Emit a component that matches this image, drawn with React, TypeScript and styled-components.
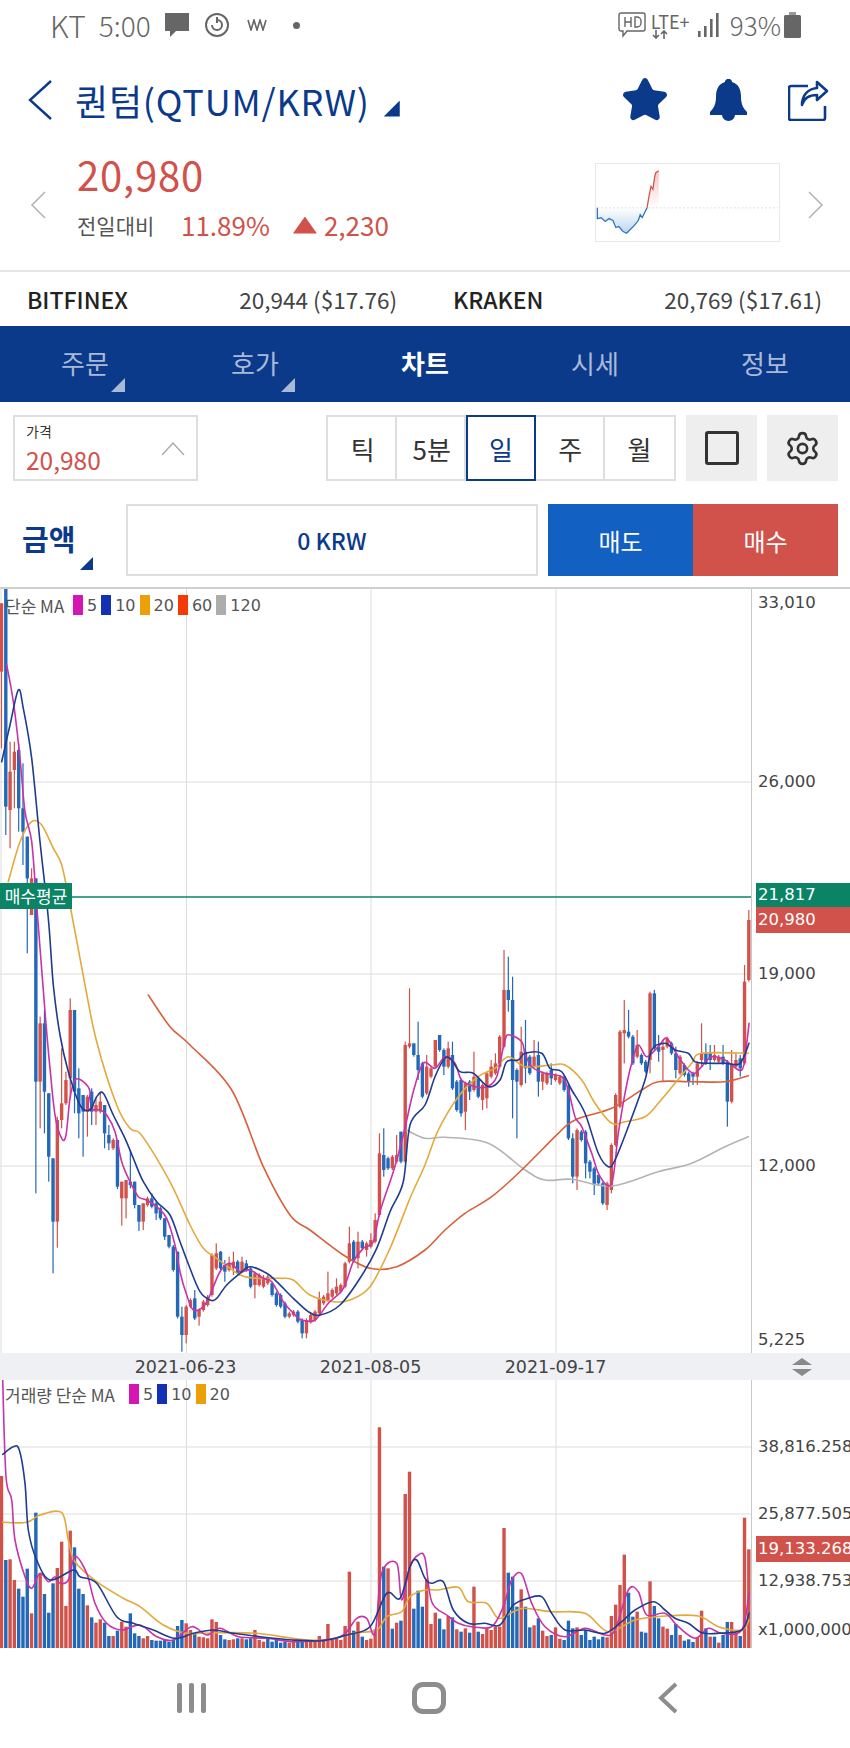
import { Settings, Star } from 'lucide-react'
import styled, { createGlobalStyle } from 'styled-components'

const NAVY = '#0b3a8b'
const RED = '#d0524a'
const BLUE = '#2468b8'
const GRID = '#dcdcdc'
const KR = `"Noto Sans CJK KR", "Noto Sans", sans-serif`
const AXIS = `"DejaVu Sans", "Noto Sans CJK KR", sans-serif`

type Pt = [number, number]
type Candle = [string, number, number, number?, number?]

const R = RED
const B = BLUE

// all coordinates below were read off the reference at 3x, hence the offsets
const conv = (pts: Pt[], ox: number, oy: number): Pt[] => pts.map(([x, y]) => [ox + x / 3, oy + y / 3])

// catmull-rom through the read-off points so the averages don't look kinked
const toPath = (pts: Pt[]) => {
    let d = `M${pts[0][0].toFixed(1)} ${pts[0][1].toFixed(1)}`
    for (let i = 0; i < pts.length - 1; i++) {
        const p0 = pts[Math.max(i - 1, 0)]
        const p1 = pts[i]
        const p2 = pts[i + 1]
        const p3 = pts[Math.min(i + 2, pts.length - 1)]
        const c1x = p1[0] + (p2[0] - p0[0]) / 6
        const c1y = p1[1] + (p2[1] - p0[1]) / 6
        const c2x = p2[0] - (p3[0] - p1[0]) / 6
        const c2y = p2[1] - (p3[1] - p1[1]) / 6
        d += `C${c1x.toFixed(1)} ${c1y.toFixed(1)} ${c2x.toFixed(1)} ${c2y.toFixed(1)} ${p2[0].toFixed(1)} ${p2[1].toFixed(1)}`
    }
    return d
}

const candlesA: Candle[] = [
    [R, 55, 260, 55, 490], [B, 0, 665, 0, 750], [R, 560, 675, 470, 790], [R, 500, 555, 470, 670],
    [B, 495, 670, 475, 740], [B, 670, 740, 535, 840], [B, 755, 880, 755, 1105], [R, 880, 990, 850, 990],
]
const candlesB: Candle[] = [
    [B, -320, 290, -320, 625], [R, 115, 290, 95, 430], [B, 115, 320, 75, 445], [B, 325, 515, 325, 590],
    [B, 520, 710, 520, 865], [R, 405, 710, 395, 788], [R, 355, 405, 190, 430], [R, 285, 355, 260, 360],
    [R, 75, 280, 40, 340], [B, 75, 320, 75, 385], [B, 310, 385, 250, 460], [B, 330, 380, 330, 515],
    [R, 335, 380, 330, 455], [B, 320, 380, 310, 420], [R, 360, 380, 340, 420], [R, 350, 380, 320, 385],
    [B, 360, 445, 360, 490], [B, 450, 475, 420, 495], [R, 465, 490, 460, 495], [B, 465, 605, 465, 612],
    [R, 590, 640, 590, 722], [R, 585, 640, 585, 700], [B, 590, 600, 495, 610], [B, 590, 660, 590, 670],
    [B, 660, 710, 660, 738], [R, 655, 710, 655, 735], [R, 640, 660, 635, 665], [B, 640, 665, 625, 670],
    [B, 655, 685, 650, 705], [B, 670, 700, 665, 705], [B, 700, 755, 700, 765], [B, 750, 785, 750, 790],
    [B, 785, 855, 780, 860], [B, 800, 995, 800, 1000], [B, 995, 1050, 965, 1100], [R, 965, 1050, 960, 1075],
    [R, 945, 965, 940, 970], [B, 940, 1000, 915, 1005], [R, 975, 995, 970, 1022], [R, 950, 975, 945, 980],
    [R, 935, 960, 930, 965], [R, 810, 930, 805, 935], [R, 805, 850, 775, 855], [B, 800, 850, 798, 855],
    [B, 840, 860, 825, 890], [R, 835, 855, 815, 860], [R, 830, 850, 800, 870], [B, 830, 865, 825, 870],
    [R, 830, 860, 815, 865], [B, 835, 855, 825, 860], [B, 850, 905, 845, 910], [R, 865, 900, 860, 940],
    [R, 870, 900, 865, 905], [R, 880, 905, 870, 910], [R, 875, 895, 870, 900], [B, 895, 930, 890, 935],
    [B, 925, 960, 920, 965], [B, 930, 965, 925, 970], [B, 955, 995, 950, 1000], [R, 985, 995, 980, 1000],
    [R, 980, 990, 975, 995], [B, 980, 1010, 975, 1015], [B, 1005, 1045, 1000, 1060], [R, 1005, 1045, 1000, 1060],
    [R, 990, 1012, 985, 1016], [R, 980, 1005, 975, 1010], [R, 940, 985, 920, 990], [R, 935, 955, 930, 960],
    [R, 925, 945, 860, 950], [R, 915, 935, 910, 940], [R, 905, 925, 880, 930], [R, 900, 920, 895, 925],
    [R, 835, 905, 830, 910], [R, 775, 830, 725, 835], [B, 770, 825, 765, 830], [R, 770, 820, 740, 850],
    [B, 770, 790, 765, 795], [R, 775, 795, 770, 815], [R, 765, 785, 745, 790], [R, 705, 770, 685, 775],
    [R, 505, 690, 445, 695], [B, 510, 555, 430, 575], [B, 520, 550, 515, 555], [R, 515, 550, 510, 555],
    [R, 510, 530, 450, 535], [B, 440, 530, 440, 535], [R, 180, 530, 170, 535], [R, 175, 185, 10, 190],
    [B, 175, 210, 175, 215], [B, 210, 255, 110, 285], [B, 235, 335, 230, 340],
]
const candlesC: Candle[] = [
    [R, 500, 580, 465, 585], [R, 505, 530, 500, 535], [R, 420, 500, 420, 505], [B, 405, 450, 405, 455],
    [B, 450, 500, 445, 525], [R, 445, 500, 425, 505], [B, 465, 565, 425, 570], [B, 545, 630, 540, 635],
    [B, 540, 640, 535, 650], [R, 550, 635, 545, 690], [B, 545, 575, 540, 600], [R, 530, 570, 455, 575],
    [B, 535, 590, 530, 595], [R, 555, 600, 550, 630], [R, 520, 595, 515, 625], [R, 500, 530, 480, 535],
    [R, 490, 520, 460, 525], [R, 410, 500, 405, 505], [R, 270, 440, 150, 445], [B, 270, 300, 170, 335],
    [B, 300, 540, 230, 655], [B, 510, 545, 505, 715], [R, 455, 555, 380, 560], [B, 455, 505, 360, 550],
    [B, 470, 520, 465, 525], [R, 470, 500, 420, 505], [B, 465, 545, 425, 590], [R, 520, 545, 515, 570],
    [R, 520, 550, 515, 555], [B, 510, 535, 490, 555], [R, 525, 540, 520, 545], [R, 530, 550, 525, 555],
    [B, 530, 570, 525, 575], [B, 560, 715, 555, 720], [B, 715, 830, 700, 850], [R, 690, 830, 685, 870],
    [B, 695, 720, 690, 725], [B, 695, 790, 690, 835], [B, 785, 815, 780, 835], [B, 805, 855, 800, 885],
    [B, 825, 850, 820, 855], [B, 850, 910, 845, 915], [R, 850, 915, 845, 930], [R, 735, 870, 730, 880],
    [R, 585, 735, 580, 740], [R, 395, 620, 390, 625], [R, 390, 400, 300, 490], [B, 395, 410, 330, 415],
    [B, 410, 490, 405, 495], [R, 435, 470, 390, 475], [B, 465, 490, 460, 495], [B, 485, 515, 480, 520],
    [R, 280, 480, 275, 520], [B, 280, 445, 270, 450], [B, 440, 455, 405, 485], [R, 440, 450, 420, 545],
    [R, 415, 440, 410, 445], [B, 430, 460, 425, 465], [B, 460, 510, 440, 535], [R, 470, 520, 465, 525],
    [B, 495, 525, 490, 530], [B, 520, 545, 515, 560], [B, 520, 530, 515, 555], [R, 490, 530, 485, 555],
    [R, 460, 480, 370, 500], [B, 460, 490, 430, 495], [B, 460, 480, 435, 510], [R, 465, 480, 435, 485],
    [R, 470, 485, 465, 490], [B, 470, 490, 435, 495], [B, 485, 605, 480, 680], [R, 490, 605, 450, 610],
    [R, 480, 500, 460, 505], [B, 475, 505, 465, 530], [R, 245, 490, 195, 495], [R, 60, 240, 30, 245],
]

const toScreen = (list: Candle[], oy: number) => list.map(([c, t, b, h, l]) => ({
    color: c,
    top: oy + t / 3,
    bottom: oy + b / 3,
    high: oy + (h ?? t) / 3,
    low: oy + (l ?? b) / 3,
}))
const candles = [...toScreen(candlesA, 585), ...toScreen(candlesB, 985), ...toScreen(candlesC, 900)]

const ma5 = toPath([
    ...conv([[20, 240], [40, 350], [60, 520], [75, 680], [95, 770], [110, 960]], 0, 585),
    ...conv([[135, 80], [150, 250], [165, 390], [185, 460], [198, 450], [210, 340], [225, 285], [250, 290], [270, 320], [265, 370], [300, 375], [320, 390], [345, 440], [365, 530], [390, 590], [415, 635], [440, 645], [470, 665], [500, 700], [525, 780], [540, 860], [560, 930], [580, 975], [610, 965], [630, 930], [660, 860], [690, 835], [720, 860], [750, 855], [790, 880], [815, 890], [850, 950], [880, 985], [905, 1005], [945, 1005], [985, 955], [1030, 910], [1060, 830], [1090, 790], [1120, 770], [1140, 680], [1180, 560], [1210, 450], [1240, 320], [1270, 235]], 0, 985),
    ...conv([[30, 505], [60, 470], [90, 490], [110, 540], [150, 560], [185, 560], [215, 530], [240, 420], [255, 405], [290, 425], [300, 460], [320, 500], [360, 520], [410, 530], [430, 570], [450, 650], [470, 680], [500, 760], [525, 830], [560, 850], [580, 700], [600, 580], [620, 490], [640, 435], [665, 470], [700, 440], [725, 415], [760, 470], [790, 510], [810, 520], [830, 500], [860, 470], [900, 480], [950, 510], [965, 430], [972, 370]], 425, 900),
])
const ma10 = toPath([
    ...conv([[5, 530], [30, 420], [55, 315], [70, 370], [95, 520], [120, 770], [145, 1000]], 0, 585),
    ...conv([[160, 0], [180, 150], [205, 260], [240, 360], [270, 375], [290, 335], [310, 325], [340, 390], [375, 460], [400, 520], [430, 590], [470, 650], [510, 690], [540, 770], [570, 850], [600, 920], [630, 945], [650, 940], [680, 900], [720, 865], [750, 845], [800, 865], [830, 890], [880, 940], [925, 980], [960, 990], [1020, 960], [1080, 880], [1130, 790], [1170, 680], [1210, 590], [1230, 420], [1275, 360]], 0, 985),
    ...conv([[30, 530], [60, 475], [80, 480], [105, 515], [145, 520], [190, 560], [225, 540], [245, 485], [280, 480], [300, 460], [350, 460], [375, 505], [410, 515], [440, 570], [480, 640], [520, 760], [550, 800], [570, 780], [610, 680], [660, 540], [680, 450], [720, 430], [750, 450], [790, 460], [810, 485], [850, 490], [900, 490], [945, 490], [972, 430]], 425, 900),
])
const ma20 = toPath([
    ...conv([[25, 890], [60, 770], [95, 710], [125, 720], [160, 790], [185, 840], [210, 960]], 0, 585),
    ...conv([[255, 0], [290, 170], [350, 360], [390, 430], [420, 445], [470, 520], [520, 610], [570, 720], [610, 790], [650, 820], [720, 870], [770, 880], [840, 880], [880, 885], [930, 930], [1000, 950], [1050, 945], [1110, 905], [1170, 790], [1230, 640], [1275, 540]], 0, 985),
    ...conv([[40, 690], [100, 590], [160, 530], [210, 505], [250, 470], [300, 500], [380, 495], [420, 495], [470, 540], [510, 610], [560, 670], [600, 665], [660, 650], [700, 610], [750, 550], [800, 490], [830, 460], [970, 460]], 425, 900),
])
const ma60 = toPath([
    ...conv([[445, 30], [510, 125], [570, 180], [695, 315], [790, 545], [870, 690], [930, 735], [1030, 810], [1110, 850], [1190, 845], [1275, 795]], 0, 985),
    ...conv([[60, 990], [120, 940], [200, 890], [290, 810], [400, 700], [450, 660], [560, 625], [650, 570], [700, 545], [800, 545], [900, 545], [970, 527]], 425, 900),
])
const ma120 = toPath([
    ...conv([[1220, 435], [1275, 460]], 0, 985),
    ...conv([[60, 712], [190, 730], [300, 810], [360, 840], [440, 838], [560, 858], [700, 815], [800, 790], [900, 740], [970, 710]], 425, 900),
])

const volumes: [string, number][] = ([
    'r378', 'b630', 'r628', 'r690', 'b716', 'b740', 'b656', 'r790', 'b488', 'r670', 'b732', 'b788', 'b700', 'r654', 'r575', 'r768', 'r542', 'b592', 'b716', 'b732',
    'r766', 'b802', 'r818', 'r808', 'b818', 'b858', 'r858', 'b842', 'r815', 'r830', 'b790', 'b850', 'b858', 'r865', 'r858', 'b870', 'b872', 'b872', 'b870', 'b875',
    'b870', 'b828', 'b810', 'r820', 'r840', 'b850', 'r860', 'r862', 'r865', 'r808', 'r816', 'b855', 'b868', 'r870', 'r868', 'b865', 'r865', 'b868', 'b865', 'r840',
    'r870', 'r875', 'b865', 'b875', 'b868', 'b878', 'b875', 'r878', 'r870', 'b875', 'b872', 'r872', 'r872', 'r870', 'r858', 'r872', 'r822', 'r865', 'r865', 'r870',
    'r828', 'r665', 'b842', 'r815', 'b860', 'r870', 'r866', 'r838', 'r232', 'b650', 'r655', 'b836', 'r818', 'b812', 'r432', 'r365', 'b776', 'b722', 'b770',
    'r690', 'r822', 'r788', 'b806', 'b838', 'r798', 'b802', 'r838', 'b845', 'r835', 'b848', 'r710', 'b845', 'r852', 'r835', 'r840', 'r830', 'r830', 'r534', 'b668',
    'b680', 'b770', 'r718', 'b770', 'b832', 'r826', 'b805', 'r842', 'r858', 'b855', 'r832', 'r866', 'b870', 'b812', 'b835', 'r832', 'b855', 'b840', 'b870', 'b860',
    'b868', 'b860', 'r862', 'r798', 'r764', 'r705', 'r614', 'b728', 'b800', 'r785', 'b845', 'b848', 'r694', 'b768', 'b805', 'r830', 'r836', 'b855', 'b822', 'r855',
    'b872', 'b868', 'b876', 'r862', 'r782', 'b835', 'r860', 'b860', 'r878', 'b855', 'b816', 'r816', 'r850', 'b858', 'r503', 'r598',
]).map(v => [v[0] === 'r' ? R : B, 1350 + Number(v.slice(1)) / 3])

const vol5 = toPath([
    ...conv([[8, 90], [18, 380], [35, 450], [45, 570], [75, 680], [95, 715], [120, 670], [145, 695], [165, 680], [180, 700], [205, 690], [225, 620], [260, 670], [285, 760], [320, 820], [365, 840], [420, 825], [470, 860], [520, 870], [575, 830], [620, 855], [660, 835], [715, 860], [800, 865], [880, 875], [970, 870], [1030, 855], [1070, 805], [1100, 805], [1125, 850], [1145, 670], [1190, 640], [1205, 750], [1230, 650], [1255, 615], [1275, 625]], 0, 1350),
    ...conv([[20, 755], [65, 795], [100, 820], [140, 830], [200, 830], [235, 770], [260, 690], [290, 672], [320, 760], [360, 830], [420, 860], [480, 835], [540, 855], [570, 840], [610, 720], [640, 725], [665, 795], [720, 790], [760, 830], [810, 865], [850, 835], [890, 850], [950, 840], [972, 730]], 425, 1350),
])
const vol10 = toPath([
    ...conv([[8, 313], [40, 290], [58, 300], [75, 400], [85, 540], [110, 630], [150, 690], [220, 660], [240, 680], [290, 700], [350, 800], [400, 820], [460, 840], [525, 865], [580, 850], [640, 840], [700, 850], [780, 860], [880, 870], [970, 872], [1040, 855], [1110, 830], [1160, 730], [1200, 745], [1230, 650], [1250, 630], [1275, 685]], 0, 1350),
    ...conv([[20, 700], [55, 695], [85, 780], [130, 820], [180, 820], [225, 825], [265, 765], [310, 745], [350, 740], [380, 790], [420, 840], [480, 840], [540, 850], [590, 815], [630, 780], [685, 755], [720, 780], [750, 805], [790, 820], [830, 848], [880, 850], [950, 840], [972, 790]], 425, 1350),
])
const vol20 = toPath([
    ...conv([[8, 517], [80, 517], [120, 495], [185, 488], [205, 570], [225, 635], [290, 695], [370, 745], [420, 770], [490, 825], [560, 850], [650, 848], [770, 850], [900, 868], [980, 870], [1060, 850], [1130, 840], [1160, 800], [1205, 785], [1230, 740], [1275, 720]], 0, 1350),
    ...conv([[40, 720], [100, 712], [130, 755], [185, 760], [220, 805], [265, 785], [300, 775], [380, 785], [480, 790], [550, 845], [630, 810], [720, 798], [820, 798], [880, 830], [950, 840], [972, 810]], 425, 1350),
])

const GlobalStyle = createGlobalStyle`
    html, body {
        margin: 0;
        padding: 0;
        background: #fff;
    }
    body {
        font-family: ${KR};
    }
`

const Page = styled.div`
    width: 850px;
    height: 1748px;
    overflow: hidden;
    background: #fff;
`

const StatusBar = styled.div`
    height: 56px;
    display: flex;
    align-items: center;
    padding: 0 49px 6px 50px;
    box-sizing: border-box;
    color: #666;
`

const StatusText = styled.span<{ $size: number; $gap?: number }>`
    font-size: ${p => p.$size}px;
    font-weight: 300;
    margin-right: ${p => p.$gap ?? 0}px;
    line-height: 1;
`

const StatusIcon = styled.svg<{ $gap?: number }>`
    flex: none;
    margin-right: ${p => p.$gap ?? 0}px;
`

const StatusRight = styled.div`
    margin-left: auto;
    display: flex;
    align-items: center;
`

const LteBlock = styled.div`
    width: 42px;
    margin-right: 5px;
    display: flex;
    flex-direction: column;
    font-size: 18px;
    line-height: 18px;
    font-weight: 400;
`

const Header = styled.div`
    height: 88px;
    display: flex;
    align-items: center;
    padding: 0 21px 0 28px;
    color: ${NAVY};
`

const Title = styled.span`
    margin-left: 23px;
    font-size: 36px;
    font-weight: 400;
    letter-spacing: 0.8px;
    white-space: nowrap;
`

const Corner = styled.span<{ $size: number; $color: string }>`
    display: inline-block;
    width: ${p => p.$size}px;
    height: ${p => p.$size}px;
    background: ${p => p.$color};
    clip-path: polygon(100% 0, 100% 100%, 0 100%);
`

const TitleCorner = styled(Corner)`
    margin: 17px 0 0 14px;
`

const HeaderIcons = styled.div`
    margin-left: auto;
    display: flex;
    align-items: center;
    gap: 40px;
`

const Quote = styled.div`
    height: 128px;
    display: flex;
    align-items: flex-start;
    padding: 0 26px 0 30px;
    border-bottom: 2px solid #e6e6e6;
    box-sizing: border-box;
`

const QuoteChevron = styled.svg`
    margin-top: 47px;
    flex: none;
`

const QuoteInfo = styled.div`
    margin-left: 31px;
    display: flex;
    flex-direction: column;
`

const QuotePrice = styled.div`
    margin-top: 4px;
    color: ${RED};
    font-size: 40px;
    line-height: 52px;
    letter-spacing: 0.8px;
`

const QuoteSub = styled.div`
    margin-top: 10px;
    display: flex;
    align-items: center;
    color: ${RED};
    font-size: 26px;
    line-height: 30px;
`

const QuoteLabel = styled.span`
    width: 104px;
    color: #555;
    font-size: 21px;
`

const UpTriangle = styled.span`
    width: 24px;
    height: 17px;
    margin: 0 7px 0 23px;
    background: ${RED};
    clip-path: polygon(50% 0, 100% 100%, 0 100%);
`

const Spark = styled.svg`
    margin: 19px 28px 0 auto;
    flex: none;
    border: 1px solid #e8e8e8;
    box-sizing: border-box;
`

const Exchanges = styled.div`
    height: 54px;
    display: grid;
    grid-template-columns: 370px 369px;
    column-gap: 56px;
    align-items: center;
    padding-left: 27px;
`

const ExchangePair = styled.div`
    display: flex;
    justify-content: space-between;
    align-items: center;
`

const ExchangeName = styled.span`
    font-size: 23px;
    font-weight: 500;
    color: #222;
`

const ExchangeValue = styled.span`
    color: #444;
    font-size: 22.5px;
    white-space: nowrap;
`

const TabBar = styled.div`
    height: 76px;
    display: grid;
    grid-template-columns: repeat(5, 170px);
    background: ${NAVY};
`

const Tab = styled.div<{ $active?: boolean }>`
    position: relative;
    display: flex;
    align-items: center;
    justify-content: center;
    padding-bottom: 4px;
    font-size: 26px;
    font-weight: ${p => (p.$active ? 700 : 400)};
    color: ${p => (p.$active ? '#fff' : '#a9b9d8')};
`

const TabCorner = styled(Corner)`
    position: absolute;
    left: 111px;
    top: 52px;
`

const Controls = styled.div`
    margin-top: 13px;
    height: 66px;
    display: flex;
    padding: 0 12px 0 13px;
`

const PriceBox = styled.div`
    position: relative;
    width: 185px;
    border: 2px solid #dedede;
    box-sizing: border-box;
    padding: 4px 0 0 11px;
`

const PriceBoxLabel = styled.div`
    font-size: 14px;
    line-height: 21px;
    color: #333;
`

const PriceBoxValue = styled.div`
    font-size: 24.5px;
    line-height: 36px;
    color: ${RED};
`

const PriceBoxCaret = styled.svg`
    position: absolute;
    right: 11px;
    top: 25px;
`

const Segments = styled.div`
    width: 350px;
    margin-left: auto;
    display: grid;
    grid-template-columns: repeat(5, 1fr);
    border: 2px solid #dedede;
    box-sizing: border-box;
`

const Segment = styled.div<{ $active?: boolean }>`
    display: flex;
    align-items: center;
    justify-content: center;
    margin: -2px 0;
    font-size: 26px;
    color: ${p => (p.$active ? NAVY : '#333')};
    border: 2px solid ${p => (p.$active ? NAVY : 'transparent')};
    border-right-color: ${p => (p.$active ? NAVY : '#dedede')};
    box-sizing: border-box;
    &:last-child {
        border-right-color: transparent;
    }
`

const SquareButton = styled.div`
    width: 71px;
    margin-left: 10px;
    display: flex;
    align-items: center;
    justify-content: center;
    background: #eeeeee;
    color: #333;
`

const WindowGlyph = styled.div`
    width: 34px;
    height: 34px;
    border: 3px solid #333;
    border-radius: 3px;
    box-sizing: border-box;
`

const AmountRow = styled.div`
    margin-top: 23px;
    height: 72px;
    display: flex;
    padding-right: 12px;
`

const AmountLabel = styled.div`
    position: relative;
    width: 126px;
    padding: 12px 0 0 22px;
    box-sizing: border-box;
    color: ${NAVY};
    font-size: 29px;
    line-height: 44px;
    font-weight: 700;
`

const AmountCorner = styled(Corner)`
    position: absolute;
    left: 80px;
    top: 53px;
`

const AmountInput = styled.div`
    width: 412px;
    display: flex;
    align-items: center;
    justify-content: center;
    border: 2px solid #dedede;
    box-sizing: border-box;
    color: ${NAVY};
    font-size: 23px;
    font-weight: 500;
`

const TradeButton = styled.div<{ $color: string; $gap?: number }>`
    width: 145px;
    margin-left: ${p => p.$gap ?? 0}px;
    display: flex;
    align-items: center;
    justify-content: center;
    background: ${p => p.$color};
    color: #fff;
    font-size: 24px;
`

const Chart = styled.div`
    margin-top: 11px;
    border-top: 2px solid #cfcfcf;
`

const Pane = styled.div<{ $height: number }>`
    height: ${p => p.$height}px;
    display: flex;
`

const Plot = styled.div`
    position: relative;
    width: 751px;
    flex: none;
    border-right: 1px solid #c8c8c8;
    box-sizing: content-box;
`

const PlotSvg = styled.svg`
    display: block;
`

const Legend = styled.div<{ $top: number }>`
    position: absolute;
    left: 5px;
    top: ${p => p.$top}px;
    display: flex;
    align-items: center;
    height: 22px;
    font-family: ${AXIS};
    font-size: 16px;
    color: #555;
    white-space: nowrap;
`

const LegendName = styled.span<{ $width: number }>`
    width: ${p => p.$width}px;
    font-family: ${KR};
    font-size: 17px;
`

const Swatch = styled.span<{ $color: string }>`
    width: 10px;
    height: 20px;
    margin: 0 4px;
    background: ${p => p.$color};
`

const AvgTag = styled.div`
    position: absolute;
    left: 0;
    top: 294px;
    width: 72px;
    height: 26px;
    background: #0a8465;
    color: #fff;
    font-size: 17px;
    line-height: 26px;
    text-align: center;
    white-space: nowrap;
`

const Axis = styled.div`
    position: relative;
    flex: 1;
    overflow: hidden;
    font-family: ${AXIS};
    font-size: 16.5px;
    color: #444;
`

const AxisLabel = styled.span<{ $y: number }>`
    position: absolute;
    left: 6px;
    top: ${p => p.$y - 12}px;
    line-height: 24px;
    white-space: nowrap;
`

const AxisTag = styled.div<{ $y: number; $h: number; $color: string }>`
    position: absolute;
    left: 4px;
    right: 0;
    top: ${p => p.$y}px;
    height: ${p => p.$h}px;
    padding-left: 2px;
    background: ${p => p.$color};
    color: #fff;
    line-height: ${p => p.$h}px;
    white-space: nowrap;
`

const TimeBar = styled.div`
    height: 27px;
    display: flex;
    align-items: center;
    background: #eef0f4;
    padding-left: 93px;
    font-family: ${AXIS};
    font-size: 17.5px;
    color: #444;
`

const TimeLabel = styled.span`
    width: 185px;
    flex: none;
    text-align: center;
`

const SwapHandle = styled.svg`
    margin-left: 144px;
    flex: none;
`

const NavBar = styled.div`
    height: 100px;
    display: grid;
    grid-template-columns: 382px 86px 1fr;
    align-items: center;
`

const NavCell = styled.div<{ $pad: number }>`
    padding-left: ${p => p.$pad}px;
    display: flex;
`

const Recents = styled.div`
    display: flex;
    gap: 7px;
`

const RecentsBar = styled.span`
    width: 5px;
    height: 30px;
    border-radius: 2px;
    background: #8d8d8d;
`

const HomeGlyph = styled.div`
    width: 34px;
    height: 32px;
    border: 5px solid #8d8d8d;
    border-radius: 11px;
    box-sizing: border-box;
`

const Sparkline = () => (
    <Spark width="185" height="79" viewBox="596 164 185 79">
        <defs>
            <linearGradient id="sparkBlue" x1="0" y1="0" x2="0" y2="1">
                <stop offset="0" stopColor="#ffffff" />
                <stop offset="1" stopColor="#bcd6f0" />
            </linearGradient>
            <linearGradient id="sparkRed" x1="0" y1="0" x2="0" y2="1">
                <stop offset="0" stopColor="#f6c4c0" />
                <stop offset="1" stopColor="#ffffff" />
            </linearGradient>
        </defs>
        <polygon points="596,209 596,220 604,223 612,222 618,230 626,235 634,227 642,217 647,209" fill="url(#sparkBlue)" />
        <polygon points="647,209 649,197 653,187 656,173 659,171 659,209" fill="url(#sparkRed)" />
        <line x1="596" y1="209" x2="781" y2="209" stroke="#ddd" strokeWidth="1" strokeDasharray="2 2" />
        <polyline points="596,209 596,220 600,219 604,223 608,220 612,222 615,229 618,228 622,233 626,235 630,231 634,227 638,222 640,216 642,219 647,209" fill="none" stroke="#2f75bd" strokeWidth="1.3" />
        <polyline points="647,209 649,197 651,187 653,190 655,176 656,173 659,171" fill="none" stroke={RED} strokeWidth="1.3" />
    </Spark>
)

const Candles = () => (
    <>
        {candles.map((c, i) => {
            const x = 1.5 + 4.295 * i
            return (
                <g key={i} fill={c.color}>
                    <rect x={x - 0.6} y={c.high} width={1.2} height={c.low - c.high} />
                    <rect x={x - 1.7} y={c.top} width={3.4} height={c.bottom - c.top} />
                </g>
            )
        })}
    </>
)

const MaLine = ({ d, color }: { d: string; color: string }) => (
    <path d={d} fill="none" stroke={color} strokeWidth={1.6} strokeLinejoin="round" strokeLinecap="round" />
)

const VerticalGrid = ({ y1, y2 }: { y1: number; y2: number }) => (
    <>
        {[186.5, 371, 556].map(x => (
            <line key={x} x1={x} x2={x} y1={y1} y2={y2} stroke={GRID} strokeWidth="1" />
        ))}
    </>
)

const HorizontalGrid = ({ ys }: { ys: number[] }) => (
    <>
        {ys.map(y => (
            <line key={y} x1="0" x2="751" y1={y} y2={y} stroke={GRID} strokeWidth="1" />
        ))}
    </>
)

const PricePane = () => (
    <Pane $height={764}>
        <Plot>
            <PlotSvg width="751" height="764" viewBox="0 589 751 764">
                <line x1="1" x2="1" y1="589" y2="1353" stroke={GRID} />
                <VerticalGrid y1={589} y2={1353} />
                <HorizontalGrid ys={[782, 974, 1166]} />
                <line x1="0" x2="751" y1="897" y2="897" stroke="#0a8465" strokeWidth="1.5" />
                <Candles />
                <MaLine d={ma120} color="#b4b4b4" />
                <MaLine d={ma60} color="#d8603c" />
                <MaLine d={ma20} color="#e2aa3c" />
                <MaLine d={ma5} color="#c833aa" />
                <MaLine d={ma10} color="#1f3c8f" />
            </PlotSvg>
            <Legend $top={5}>
                <LegendName $width={64}>단순 MA</LegendName>
                <Swatch $color="#d516b4" />5
                <Swatch $color="#1231b4" />10
                <Swatch $color="#eba007" />20
                <Swatch $color="#f33a05" />60
                <Swatch $color="#adadad" />120
            </Legend>
            <AvgTag>매수평균</AvgTag>
        </Plot>
        <Axis>
            <AxisLabel $y={14}>33,010</AxisLabel>
            <AxisLabel $y={193}>26,000</AxisLabel>
            <AxisTag $y={294} $h={24} $color="#0a8465">21,817</AxisTag>
            <AxisTag $y={318} $h={26} $color={RED}>20,980</AxisTag>
            <AxisLabel $y={385}>19,000</AxisLabel>
            <AxisLabel $y={577}>12,000</AxisLabel>
            <AxisLabel $y={751}>5,225</AxisLabel>
        </Axis>
    </Pane>
)

const VolumePane = () => (
    <Pane $height={268}>
        <Plot>
            <PlotSvg width="751" height="268" viewBox="0 1380 751 268">
                <VerticalGrid y1={1380} y2={1648} />
                <HorizontalGrid ys={[1447, 1514, 1581]} />
                {volumes.map(([color, top], i) => (
                    <rect key={i} x={1.5 + 4.295 * i - 1.7} y={top} width={3.4} height={1648 - top} fill={color} />
                ))}
                <MaLine d={vol20} color="#e2aa3c" />
                <MaLine d={vol5} color="#c833aa" />
                <MaLine d={vol10} color="#1f3c8f" />
            </PlotSvg>
            <Legend $top={3}>
                <LegendName $width={120}>거래량 단순 MA</LegendName>
                <Swatch $color="#d516b4" />5
                <Swatch $color="#1231b4" />10
                <Swatch $color="#eba007" />20
            </Legend>
        </Plot>
        <Axis>
            <AxisLabel $y={67}>38,816.258</AxisLabel>
            <AxisLabel $y={134}>25,877.505</AxisLabel>
            <AxisTag $y={156} $h={26} $color={RED}>19,133.268</AxisTag>
            <AxisLabel $y={201}>12,938.753</AxisLabel>
            <AxisLabel $y={250}>x1,000,000</AxisLabel>
        </Axis>
    </Pane>
)

const App = () => (
    <Page>
        <GlobalStyle />
        <StatusBar>
            <StatusText $size={30} $gap={13}>KT</StatusText>
            <StatusText $size={28} $gap={13}>5:00</StatusText>
            <StatusIcon $gap={14} width="26" height="26" viewBox="0 0 26 26">
                <path d="M1 1h24v18H12l-6 6v-6H1z" fill="#666" />
            </StatusIcon>
            <StatusIcon $gap={17} width="26" height="26" viewBox="0 0 26 26" fill="none" stroke="#666" strokeWidth="2">
                <circle cx="13" cy="13" r="11" />
                <path d="M8 13a5 5 0 1 0 5-5M13 5v6" />
            </StatusIcon>
            <StatusIcon $gap={24} width="22" height="12" viewBox="0 0 22 12" fill="none" stroke="#666" strokeWidth="1.6">
                <path d="M1 1l3 10 3-10 3 10 3-10 3 10 3-10" />
            </StatusIcon>
            <StatusIcon width="7" height="7" viewBox="0 0 7 7">
                <circle cx="3.5" cy="3.5" r="3.5" fill="#666" />
            </StatusIcon>
            <StatusRight>
                <StatusIcon $gap={5} width="28" height="26" viewBox="0 0 28 26" fill="none" stroke="#666" strokeWidth="1.4">
                    <path d="M3 1h22a2 2 0 0 1 2 2v14a2 2 0 0 1-2 2H9l-4 5v-5H3a2 2 0 0 1-2-2V3a2 2 0 0 1 2-2z" />
                    <path d="M7 5v10M13 5v10M7 10h6M17 5v10h2a4 4 0 0 0 4-4V9a4 4 0 0 0-4-4z" />
                </StatusIcon>
                <LteBlock>
                    LTE+
                    <svg width="18" height="9" viewBox="0 0 18 9" fill="none" stroke="#666" strokeWidth="1.6">
                        <path d="M5 0v8M2 5l3 3 3-3M13 9V1M10 4l3-3 3 3" />
                    </svg>
                </LteBlock>
                <StatusIcon $gap={10} width="22" height="24" viewBox="0 0 22 24" fill="#666">
                    <rect x="0" y="18" width="2.6" height="6" />
                    <rect x="6" y="13" width="2.6" height="11" />
                    <rect x="12" y="6" width="2.6" height="18" />
                    <rect x="18" y="0" width="2.6" height="24" />
                </StatusIcon>
                <StatusText $size={26} $gap={3}>93%</StatusText>
                <StatusIcon width="17" height="26" viewBox="0 0 17 26">
                    <rect x="5" y="0" width="7" height="3" fill="#999" />
                    <rect x="0" y="3" width="17" height="23" rx="1.5" fill="#666" />
                </StatusIcon>
            </StatusRight>
        </StatusBar>

        <Header>
            <svg width="24" height="40" viewBox="0 0 24 40" fill="none" stroke={NAVY} strokeWidth="2.4">
                <polyline points="23,1 2,20 23,39" />
            </svg>
            <Title>퀀텀(QTUM/KRW)</Title>
            <TitleCorner $size={16} $color={NAVY} />
            <HeaderIcons>
                <Star size={48} color={NAVY} fill={NAVY} strokeWidth={2} />
                <svg width="39" height="42" viewBox="0 0 39 42" fill={NAVY}>
                    <path d="M19.5 0c-3 0-3.5 2-3.5 3C9 5 7 11 7 18c0 8-3 12-6 15v3h37v-3c-3-3-6-7-6-15C32 11 30 5 23 3c0-1-.5-3-3.5-3z" />
                    <path d="M13 36a6.5 6 0 0 0 13 0z" />
                </svg>
                <svg width="41" height="41" viewBox="0 0 41 41" fill="none" stroke={NAVY} strokeWidth="2.6" strokeLinejoin="round">
                    <path d="M20 6H3a2 2 0 0 0-2 2v30a2 2 0 0 0 2 2h32a2 2 0 0 0 2-2V26" />
                    <path d="M29 2l10 9-10 9v-5c-8 0-13 3-15 10 0-9 5-16 15-17z" />
                </svg>
            </HeaderIcons>
        </Header>

        <Quote>
            <QuoteChevron width="16" height="28" viewBox="0 0 16 28" fill="none" stroke="#b5b5b5" strokeWidth="1.6">
                <polyline points="15,1 2,14 15,27" />
            </QuoteChevron>
            <QuoteInfo>
                <QuotePrice>20,980</QuotePrice>
                <QuoteSub>
                    <QuoteLabel>전일대비</QuoteLabel>
                    11.89%
                    <UpTriangle />
                    2,230
                </QuoteSub>
            </QuoteInfo>
            <Sparkline />
            <QuoteChevron width="16" height="28" viewBox="0 0 16 28" fill="none" stroke="#b5b5b5" strokeWidth="1.6">
                <polyline points="1,1 14,14 1,27" />
            </QuoteChevron>
        </Quote>

        <Exchanges>
            <ExchangePair>
                <ExchangeName>BITFINEX</ExchangeName>
                <ExchangeValue>20,944 ($17.76)</ExchangeValue>
            </ExchangePair>
            <ExchangePair>
                <ExchangeName>KRAKEN</ExchangeName>
                <ExchangeValue>20,769 ($17.61)</ExchangeValue>
            </ExchangePair>
        </Exchanges>

        <TabBar>
            <Tab>주문<TabCorner $size={14} $color="#a9b9d8" /></Tab>
            <Tab>호가<TabCorner $size={14} $color="#a9b9d8" /></Tab>
            <Tab $active>차트</Tab>
            <Tab>시세</Tab>
            <Tab>정보</Tab>
        </TabBar>

        <Controls>
            <PriceBox>
                <PriceBoxLabel>가격</PriceBoxLabel>
                <PriceBoxValue>20,980</PriceBoxValue>
                <PriceBoxCaret width="24" height="14" viewBox="0 0 24 14" fill="none" stroke="#aaa" strokeWidth="1.4">
                    <polyline points="1,13 12,1 23,13" />
                </PriceBoxCaret>
            </PriceBox>
            <Segments>
                <Segment>틱</Segment>
                <Segment>5분</Segment>
                <Segment $active>일</Segment>
                <Segment>주</Segment>
                <Segment>월</Segment>
            </Segments>
            <SquareButton><WindowGlyph /></SquareButton>
            <SquareButton><Settings size={37} strokeWidth={1.7} /></SquareButton>
        </Controls>

        <AmountRow>
            <AmountLabel>금액<AmountCorner $size={13} $color={NAVY} /></AmountLabel>
            <AmountInput>0 KRW</AmountInput>
            <TradeButton $color="#1261c2" $gap={10}>매도</TradeButton>
            <TradeButton $color={RED}>매수</TradeButton>
        </AmountRow>

        <Chart>
            <PricePane />
            <TimeBar>
                <TimeLabel>2021-06-23</TimeLabel>
                <TimeLabel>2021-08-05</TimeLabel>
                <TimeLabel>2021-09-17</TimeLabel>
                <SwapHandle width="20" height="18" viewBox="0 0 20 18" fill="#8a8a8a">
                    <polygon points="10,0 20,7 0,7" />
                    <polygon points="0,11 20,11 10,18" />
                </SwapHandle>
            </TimeBar>
            <VolumePane />
        </Chart>

        <NavBar>
            <NavCell $pad={177}>
                <Recents>
                    <RecentsBar />
                    <RecentsBar />
                    <RecentsBar />
                </Recents>
            </NavCell>
            <NavCell $pad={30}><HomeGlyph /></NavCell>
            <NavCell $pad={190}>
                <svg width="20" height="32" viewBox="0 0 20 32" fill="none" stroke="#8d8d8d" strokeWidth="4">
                    <polyline points="18,2 3,16 18,30" />
                </svg>
            </NavCell>
        </NavBar>
    </Page>
)

export default App
